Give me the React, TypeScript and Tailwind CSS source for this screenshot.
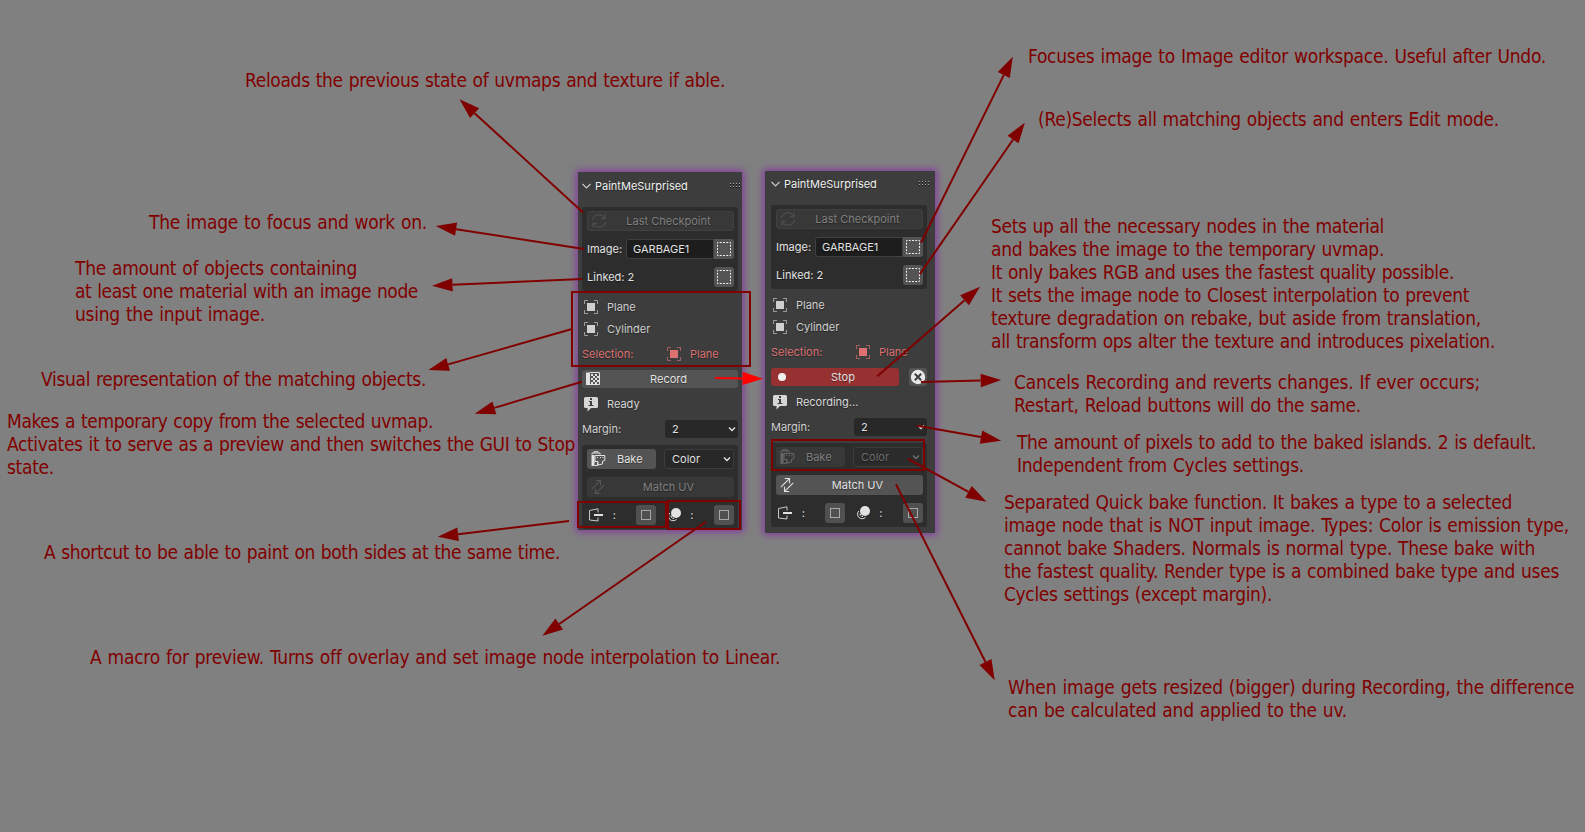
import { useLayoutEffect, useRef, useState } from "react";
import type { ReactNode } from "react";

type LineSpec = [text: string, width: number];

function Line({ text, width }: { text: string; width: number }) {
  const ref = useRef<HTMLSpanElement>(null);
  const [spacing, setSpacing] = useState(0);
  useLayoutEffect(() => {
    if (ref.current) {
      ref.current.style.letterSpacing = "0px";
      const natural = ref.current.getBoundingClientRect().width;
      const next = (width - natural) / text.length;
      ref.current.style.letterSpacing = `${next}px`;
      setSpacing(next);
    }
  }, [text, width]);
  return (
    <div className="h-[23px] whitespace-nowrap">
      <span ref={ref} className="inline-block h-[23px] align-top [word-spacing:0.8px]" style={{ letterSpacing: `${spacing}px` }}>
        {text}
      </span>
    </div>
  );
}

/* x: left edge of the text, y: baseline of the first line */
const notes: { x: number; y: number; lines: LineSpec[] }[] = [
  { x: 245, y: 87, lines: [["Reloads the previous state of uvmaps and texture if able.", 480]] },
  { x: 149, y: 229, lines: [["The image to focus and work on.", 278]] },
  {
    x: 75,
    y: 275,
    lines: [
      ["The amount of objects containing", 282],
      ["at least one material with an image node", 343],
      ["using the input image.", 190],
    ],
  },
  { x: 41, y: 386, lines: [["Visual representation of the matching objects.", 385]] },
  {
    x: 7,
    y: 428,
    lines: [
      ["Makes a temporary copy from the selected uvmap.", 426],
      ["Activates it to serve as a preview and then switches the GUI to Stop", 568],
      ["state.", 47],
    ],
  },
  { x: 44, y: 559, lines: [["A shortcut to be able to paint on both sides at the same time.", 516]] },
  { x: 90, y: 664, lines: [["A macro for preview. Turns off overlay and set image node interpolation to Linear.", 690]] },
  { x: 1028, y: 63, lines: [["Focuses image to Image editor workspace. Useful after Undo.", 518]] },
  { x: 1038, y: 126, lines: [["(Re)Selects all matching objects and enters Edit mode.", 461]] },
  {
    x: 991,
    y: 233,
    lines: [
      ["Sets up all the necessary nodes in the material", 393],
      ["and bakes the image to the temporary uvmap.", 393],
      ["It only bakes RGB and uses the fastest quality possible.", 463],
      ["It sets the image node to Closest interpolation to prevent", 478],
      ["texture degradation on rebake, but aside from translation,", 490],
      ["all transform ops alter the texture and introduces pixelation.", 504],
    ],
  },
  {
    x: 1014,
    y: 389,
    lines: [
      ["Cancels Recording and reverts changes. If ever occurs;", 466],
      ["Restart, Reload buttons will do the same.", 347],
    ],
  },
  {
    x: 1017,
    y: 449,
    lines: [
      ["The amount of pixels to add to the baked islands. 2 is default.", 519],
      ["Independent from Cycles settings.", 287],
    ],
  },
  {
    x: 1004,
    y: 509,
    lines: [
      ["Separated Quick bake function. It bakes a type to a selected", 508],
      ["image node that is NOT input image. Types: Color is emission type,", 565],
      ["cannot bake Shaders. Normals is normal type. These bake with", 531],
      ["the fastest quality. Render type is a combined bake type and uses", 555],
      ["Cycles settings (except margin).", 268],
    ],
  },
  {
    x: 1008,
    y: 694,
    lines: [
      ["When image gets resized (bigger) during Recording, the difference", 566],
      ["can be calculated and applied to the uv.", 339],
    ],
  },
];

type Arrow = [x1: number, y1: number, x2: number, y2: number, color?: string];

const arrows: Arrow[] = [
  [583, 212.5, 459.5, 99.3],
  [584, 249, 435.8, 226],
  [582, 279, 432, 285.8],
  [572, 329, 428.4, 370],
  [582, 381.7, 474.7, 413.7],
  [569, 521, 437.7, 536.7],
  [706, 521.7, 542.4, 635.7],
  [921, 242.7, 1012.8, 56.7],
  [919.7, 274.3, 1024.8, 122.7],
  [877.3, 376.3, 980, 286.7],
  [921, 382, 1001.2, 380],
  [917, 425.7, 1001.2, 440.7],
  [908.3, 459, 986.5, 501.7],
  [896, 484.3, 994.7, 680.3],
  [715, 378, 763, 378.7, "#ff0000"],
];

const frames = [
  [572, 292, 178, 74],
  [578, 502, 88, 25],
  [668, 501, 72, 28],
  [772, 440, 152, 30],
];

function Overlay() {
  return (
    <svg className="absolute inset-0 h-[832px] w-[1585px]" viewBox="0 0 1585 832" fill="none">
      {frames.map(([x, y, w, h]) => (
        <rect key={`${x}-${y}`} x={x} y={y} width={w} height={h} stroke="#800000" strokeWidth="2" />
      ))}
      {arrows.map(([x1, y1, x2, y2, color = "#800000"]) => {
        const len = Math.hypot(x2 - x1, y2 - y1);
        const ux = (x2 - x1) / len;
        const uy = (y2 - y1) / len;
        const bx = x2 - ux * 20.5;
        const by = y2 - uy * 20.5;
        return (
          <g key={`${x1}-${y1}`}>
            <line x1={x1} y1={y1} x2={bx} y2={by} stroke={color} strokeWidth="2" />
            <polygon
              points={`${x2},${y2} ${bx - uy * 6.7},${by + ux * 6.7} ${bx + uy * 6.7},${by - ux * 6.7}`}
              fill={color}
            />
          </g>
        );
      })}
    </svg>
  );
}

function Icon({ children, className = "" }: { children: ReactNode; className?: string }) {
  return (
    <svg className={`h-4 w-4 shrink-0 ${className}`} viewBox="0 0 16 16" fill="none" stroke="currentColor">
      {children}
    </svg>
  );
}

const RefreshIcon = () => (
  <Icon>
    <path d="M1.5 7C2 3.8 4.6 1.8 7.7 1.8c2.500 0 4.600 1.300 5.700 3.400M14 1.500v4.300H9.800M14.500 9c-.5 3.200-3.100 5.200-6.200 5.200-2.500 0-4.600-1.300-5.700-3.400M2 14.500v-4.300h4.200" />
  </Icon>
);

const DashedBox = () => (
  <Icon>
    <rect x="1.500" y="1.500" width="13" height="13" stroke="#f4f4f4" strokeDasharray="1.900 1.350" strokeDashoffset="0.950" />
  </Icon>
);

const MeshIcon = () => (
  <Icon>
    <path d="M1.500 5V1.500H5M11 1.500h3.500V5M14.500 11v3.500H11M5 14.500H1.500V11" strokeOpacity=".65" />
    <rect x="4" y="4" width="8" height="8" fill="currentColor" stroke="none" />
  </Icon>
);

const RecordIcon = () => (
  <Icon>
    <path d="M1 1.500h4v12.500H1z" fill="currentColor" stroke="none" />
    <path d="M5 1.500h9.500v12H5" />
    <path
      d="M6 3h2v2H6zM10 3h2v2h-2zM8 5h2v2H8zM12 5h2v2h-2zM6 7h2v2H6zM10 7h2v2h-2zM8 9h2v2H8zM12 9h2v2h-2zM6 11h2v2H6zM10 11h2v2h-2z"
      fill="currentColor"
      stroke="none"
    />
  </Icon>
);

const InfoIcon = () => (
  <Icon>
    <path
      d="M2.500 1h11A1.500 1.500 0 0 1 15 2.500v8a1.500 1.500 0 0 1-1.500 1.500H8l-3.500 3.500V12h-2A1.500 1.500 0 0 1 1 10.500v-8A1.500 1.500 0 0 1 2.500 1z"
      fill="#d6d6d6"
      stroke="none"
    />
    <path d="M7 2h2v2H7zM6 5h3v4h1.500v1H5.500V9H7V6H6z" fill="#3d3d3d" stroke="none" />
  </Icon>
);

const BakeIcon = () => (
  <Icon>
    <path d="M2 3.500V2h8v1.500M4 1.800V.7h4v1.100" />
    <path d="M1.500 4h3v11h-3z" fill="currentColor" stroke="none" />
    <path d="M4.500 14.500h3v-3" />
    <path d="M5 4.500h9.800v5l-2.300.8v2.700l-4.500 1v-3.500H5z" />
    <path d="M7 6.500h1M10 6.500h1M12.500 6.500h1" />
  </Icon>
);

const MatchIcon = () => (
  <Icon>
    <path d="M1.800 10.200 10.300 1.700M5.800 1.500h4.700v4.700M14.200 5.800 5.700 14.300M10.200 14.500H5.500V9.800" strokeWidth="1.100" />
  </Icon>
);

const MirrorIcon = () => (
  <Icon>
    <path d="M10 5.500V1.800L1.500 3.500v9.500l8.500 1V10.500" strokeOpacity=".85" />
    <path d="M6 8h9" strokeWidth="2" />
  </Icon>
);

const OverlayIcon = () => (
  <Icon>
    <circle cx="10" cy="6" r="5" fill="currentColor" stroke="none" />
    <path d="M3.800 6a4.500 4.500 0 1 0 6.700 6.300" />
    <path d="M5 8.500c.2 1.600 1.400 2.800 3 3" strokeWidth="1.200" strokeDasharray="2.200 .8" />
  </Icon>
);

const CheckBox = () => (
  <div className="flex h-5 w-5 items-center justify-center rounded-[3px] bg-[#505050]">
    <div className="h-[10px] w-[10px] border border-[#a8a8a8]" />
  </div>
);

const Chevron = () => (
  <svg className="shrink-0" width="10" height="8" viewBox="0 0 10 8" fill="none" stroke="currentColor" strokeWidth="1.400">
    <path d="m2 2.500 3 3 3-3" />
  </svg>
);

const dim = "text-[#808080]";

function Panel({ recording = false }: { recording?: boolean }) {
  return (
    <div
      className={`font-[Inter,sans-serif] text-[11px] leading-4 text-[#e2e2e2] [text-shadow:0_1px_1px_#00000066] bg-[#3d3d3d] shadow-[0_0_7px_2px_#843c9e] absolute ${
        recording ? "left-[765px] top-[171px] h-[362px] w-[170px] pl-[6px] pr-2" : "left-[578px] top-[172px] h-[358px] w-[164px] px-1"
      }`}
    >
      <div className={`flex h-[34px] items-center ${recording ? "-mt-px" : ""}`}>
        <div className="-mt-[6px] flex w-full items-center">
          <svg className="h-3 w-[10px]" viewBox="0 0 10 12" fill="none" stroke="#c8c8c8" strokeWidth="1.200">
            <path d="m.5 4 4 4 4-4" />
          </svg>
          <span className="ml-[3px] text-[#f0f0f0]">PaintMeSurprised</span>
          <svg className="-mr-1 ml-auto h-[6px] w-3" viewBox="0 0 12 6" fill="none">
            <path d="M0 .5h12M0 3.500h12" stroke="#a8a8a8" strokeDasharray="1 2" />
            <path d="M0 1.500h12M0 4.500h12" stroke="#101010" strokeDasharray="1 2" />
          </svg>
        </div>
      </div>

      <div className="mt-px flex h-[84px] flex-col gap-2 rounded-[3px] bg-[#2d2d2d] pl-[5px] pr-1 pt-1">
        <div className="flex h-5 items-center rounded-[3px] border border-[#404040] bg-[#383838] pl-[3px]">
          <span className="text-[#555]">
            <RefreshIcon />
          </span>
          <span className={`flex-1 pr-[3px] text-center ${dim}`}>Last Checkpoint</span>
        </div>
        <div className="flex h-5 items-center">
          <span className="w-[39px]">Image:</span>
          <span className="flex h-5 flex-1 items-center rounded-l-[3px] border border-[#404040] bg-[#1d1d1d] pl-[6px]">GARBAGE1</span>
          <span className="flex h-5 w-5 items-center justify-center rounded-r-[3px] bg-[#545454]">
            <DashedBox />
          </span>
        </div>
        <div className="flex h-5 items-center justify-between">
          <span>Linked: 2</span>
          <span className="flex h-5 w-5 items-center justify-center rounded-[3px] bg-[#545454]">
            <DashedBox />
          </span>
        </div>
      </div>

      <div className="mt-[5px] flex flex-col text-[#cfcfcf]">
        {["Plane", "Cylinder"].map((name) => (
          <div key={name} className="flex h-[22px] items-center pl-px">
            <MeshIcon />
            <span className="ml-2">{name}</span>
          </div>
        ))}
      </div>

      <div className="mt-[3px] flex h-[22px] items-center text-[#dd7070]">
        <span className="w-[84px]">Selection:</span>
        <MeshIcon />
        <span className="ml-2">Plane</span>
      </div>

      <div className="mt-[5px] flex h-[18px] items-center">
        {recording ? (
          <>
            <div className="flex h-[18px] w-32 items-center rounded-[3px] bg-[#973131] pl-[7px]">
              <span className="h-2 w-2 rounded-full bg-[#f0f0f0]" />
              <span className="flex-1 pl-px text-center">Stop</span>
            </div>
            <div className="ml-[10px] flex h-[18px] w-[18px] items-center justify-center rounded-[3px] bg-[#545454]">
              <Icon>
                <circle cx="8" cy="8" r="7.200" fill="#e8e8e8" stroke="none" />
                <path d="m4.800 4.800 6.400 6.400M11.200 4.800l-6.400 6.400" stroke="#3d3d3d" strokeWidth="2" />
              </Icon>
            </div>
          </>
        ) : (
          <div className="flex h-[18px] w-full items-center rounded-[3px] bg-[#545454] pl-[3px]">
            <RecordIcon />
            <span className="flex-1 pr-[2px] text-center">Record</span>
          </div>
        )}
      </div>

      <div className="mt-[5px] flex h-[22px] items-center pl-px text-[#d8d8d8]">
        <InfoIcon />
        <span className="ml-2">{recording ? "Recording..." : "Ready"}</span>
      </div>

      <div className="mt-[5px] flex h-[18px] items-center justify-between text-[#d0d0d0]">
        <span>Margin:</span>
        <span className="flex h-[18px] w-[73px] items-center justify-between rounded-[3px] bg-[#282828] pl-[7px] pr-px text-[#e2e2e2]">
          2<Chevron />
        </span>
      </div>

      <div className="mt-[7px] flex h-[84px] flex-col rounded-[3px] bg-[#2d2d2d] pl-[5px] pr-1 pt-[4px]">
        <div className="flex h-5 justify-between">
          <div className={`flex w-[69px] items-center rounded-[3px] pl-[3px] ${recording ? "bg-[#383838] text-[#666]" : "bg-[#545454]"}`}>
            <BakeIcon />
            <span className={`ml-[11px] ${recording ? dim : ""}`}>Bake</span>
          </div>
          <div
            className={`flex w-[70px] items-center justify-between rounded-[3px] border border-[#3d3d3d] pl-[7px] pr-px ${
              recording ? "bg-[#2b2b2b] text-[#6f6f6f]" : "bg-[#282828]"
            }`}
          >
            Color
            <Chevron />
          </div>
        </div>
        <div className={`mt-2 flex h-5 items-center rounded-[3px] pl-[3px] ${recording ? "bg-[#545454]" : "bg-[#383838] text-[#555]"}`}>
          <MatchIcon />
          <span className={`flex-1 pr-[3px] text-center ${recording ? "" : dim}`}>Match UV</span>
        </div>
        <div className="mt-2 flex h-5 items-center">
          <span className="w-[26px] pl-px">
            <MirrorIcon />
          </span>
          <span className="w-[23px]">:</span>
          <CheckBox />
          <span className="w-[35px] pl-[10px]">
            <OverlayIcon />
          </span>
          <span className="w-[24px]">:</span>
          <CheckBox />
        </div>
      </div>
    </div>
  );
}

export default function App() {
  return (
    <main className="relative h-[832px] w-[1585px] overflow-hidden bg-[#808080]">
      <Panel />
      <Panel recording />
      {notes.map((note) => (
        <div
          key={note.y + "-" + note.x}
          className="absolute font-['DejaVu_Sans_Condensed','DejaVu_Sans',sans-serif] text-[19px] [font-stretch:condensed] leading-[23px] text-[#800000]"
          style={{ left: note.x, top: note.y - 18 }}
        >
          {note.lines.map(([text, width]) => (
            <Line key={text} text={text} width={width} />
          ))}
        </div>
      ))}
      <Overlay />
    </main>
  );
}
